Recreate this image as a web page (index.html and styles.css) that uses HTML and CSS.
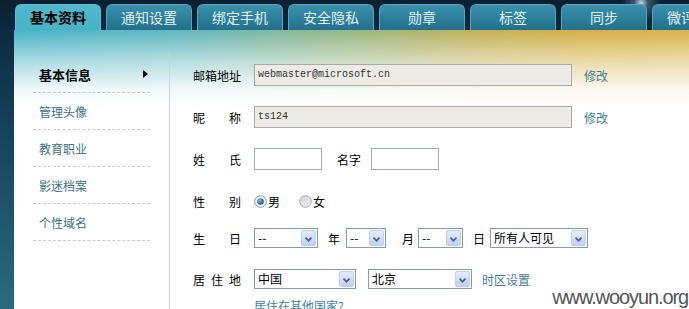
FILE: index.html
```html
<!DOCTYPE html>
<html>
<head>
<meta charset="utf-8">
<link rel="stylesheet" href="styles.css">
</head>
<body>
<div class="page">
  <nav class="tabs">
    <div class="tab active">基本资料</div>
    <div class="tab">通知设置</div>
    <div class="tab">绑定手机</div>
    <div class="tab">安全隐私</div>
    <div class="tab">勋章</div>
    <div class="tab">标签</div>
    <div class="tab">同步</div>
    <div class="tab">微评设置</div>
  </nav>
  <div class="main">
    <aside class="side">
      <ul class="menu">
        <li class="cur"><span>基本信息</span><i class="tri"></i></li>
        <li>管理头像</li>
        <li>教育职业</li>
        <li>影迷档案</li>
        <li>个性域名</li>
      </ul>
    </aside>
    <section class="form">
      <div class="row r1">
        <div class="lbl"><span>邮箱地址</span></div>
        <div class="inp ro wide">webmaster@microsoft.cn</div>
        <a class="link edit">修改</a>
      </div>
      <div class="row r2">
        <div class="lbl"><span>昵</span><span>称</span></div>
        <div class="inp ro wide">ts124</div>
        <a class="link edit">修改</a>
      </div>
      <div class="row r3">
        <div class="lbl"><span>姓</span><span>氏</span></div>
        <div class="inp small"></div>
        <span class="mid">名字</span>
        <div class="inp small"></div>
      </div>
      <div class="row r4">
        <div class="lbl"><span>性</span><span>别</span></div>
        <span class="radio">
          <svg width="13" height="13" viewBox="0 0 13 13"><defs><radialGradient id="rg" cx="0.4" cy="0.35" r="0.7"><stop offset="0" stop-color="#7fb7e6"/><stop offset="1" stop-color="#0f4f86"/></radialGradient></defs><circle cx="6.5" cy="6.5" r="5.8" fill="#f4f4f4" stroke="#8a9aa8" stroke-width="1"/><circle cx="6.5" cy="6.5" r="3.3" fill="url(#rg)"/></svg>
        </span>
        <span class="rtext">男</span>
        <span class="radio gap">
          <svg width="13" height="13" viewBox="0 0 13 13"><defs><linearGradient id="lg" x1="0" y1="0" x2="1" y2="1"><stop offset="0" stop-color="#cfcfcf"/><stop offset="1" stop-color="#f7f7f7"/></linearGradient></defs><circle cx="6.5" cy="6.5" r="5.8" fill="url(#lg)" stroke="#a4a9ad" stroke-width="1"/></svg>
        </span>
        <span class="rtext">女</span>
      </div>
      <div class="row r5">
        <div class="lbl"><span>生</span><span>日</span></div>
        <div class="sel s1"><span class="v">--</span><span class="arr"><svg width="15" height="16" viewBox="0 0 15 16"><path d="M4 6.5 L7.5 10 L11 6.5" fill="none" stroke="#4d6185" stroke-width="2"/></svg></span></div>
        <span class="unit u1">年</span>
        <div class="sel s2"><span class="v">--</span><span class="arr"><svg width="15" height="16" viewBox="0 0 15 16"><path d="M4 6.5 L7.5 10 L11 6.5" fill="none" stroke="#4d6185" stroke-width="2"/></svg></span></div>
        <span class="unit u2">月</span>
        <div class="sel s3"><span class="v">--</span><span class="arr"><svg width="15" height="16" viewBox="0 0 15 16"><path d="M4 6.5 L7.5 10 L11 6.5" fill="none" stroke="#4d6185" stroke-width="2"/></svg></span></div>
        <span class="unit u3">日</span>
        <div class="sel s4"><span class="v">所有人可见</span><span class="arr"><svg width="15" height="16" viewBox="0 0 15 16"><path d="M4 6.5 L7.5 10 L11 6.5" fill="none" stroke="#4d6185" stroke-width="2"/></svg></span></div>
      </div>
      <div class="row r6">
        <div class="lbl"><span>居</span><span>住</span><span>地</span></div>
        <div class="sel s5"><span class="v">中国</span><span class="arr"><svg width="15" height="16" viewBox="0 0 15 16"><path d="M4 6.5 L7.5 10 L11 6.5" fill="none" stroke="#4d6185" stroke-width="2"/></svg></span></div>
        <div class="sel s6"><span class="v">北京</span><span class="arr"><svg width="15" height="16" viewBox="0 0 15 16"><path d="M4 6.5 L7.5 10 L11 6.5" fill="none" stroke="#4d6185" stroke-width="2"/></svg></span></div>
        <a class="link tz">时区设置</a>
      </div>
      <div class="other"><a class="link">居住在其他国家?</a></div>
    </section>
  </div>
  <div class="wm">www.wooyun.org</div>
</div>
</body>
</html>
```
FILE: styles.css
```css
* { box-sizing: border-box; margin: 0; padding: 0; }
html, body { width: 689px; height: 309px; overflow: hidden; }
body {
  font: 12px "Noto Sans CJK SC", "Liberation Sans", sans-serif;
  color: #000;
  background:
    radial-gradient(circle at 641px 3px, rgba(235,245,255,0.85) 0, rgba(140,175,210,0.35) 7px, rgba(0,0,0,0) 20px),
    linear-gradient(#0a1f31 0, #0c2a40 30px, #164860 150px, #2a6a7f 309px);
}
.page { position: relative; height: 309px; }

.tabs { display: flex; gap: 5px; padding: 4px 0 0 15px; height: 30px; overflow: hidden; white-space: nowrap; }
.tab {
  flex: 0 0 86px; height: 26px;
  border: 1px solid #5aa3bb; border-bottom: 0; border-radius: 6px 6px 0 0;
  background: linear-gradient(#3a91ab, #226f8c);
  color: #e2f2f7; font-size: 14px; line-height: 24px; text-align: center;
}
.tab.active { background: linear-gradient(#52b8cc, #48b2c7); border-color: #5fbdd0; color: #000; font-weight: bold; }

.main {
  margin-left: 14px; height: 279px; display: flex;
  background:
    linear-gradient(rgba(255,255,255,0) 0, rgba(255,255,255,0.55) 32px, rgba(255,255,255,0.92) 60px, #fff 78px),
    linear-gradient(90deg, #47b3c7 0, #62b9bf 25%, #95b787 48%, #c1b258 68%, #d6b146 85%, #d9b44e 100%);
}

.side { width: 156px; margin-top: 22px; padding-top: 4px; border-right: 1px solid #d3d3d3; flex: none; }
.menu { list-style: none; margin-left: 19px; width: 117px; }
.menu li {
  height: 37px; border-bottom: 1px dashed #cacaca; padding: 0 2px 0 6px;
  display: flex; align-items: center; justify-content: space-between;
  color: #417282; font-size: 12px;
}
.menu li.cur { color: #000; font-weight: bold; font-size: 13px; }
.tri { width: 0; height: 0; border-left: 5px solid #000; border-top: 4px solid transparent; border-bottom: 4px solid transparent; }

.form { padding: 34px 0 0 23px; flex: 1; }
.row { display: flex; align-items: center; height: 22px; }
.r2, .r3, .r4 { margin-top: 20px; }
.r5 { margin-top: 16px; height: 20px; }
.r6 { margin-top: 21px; height: 20px; }
.lbl { width: 48px; margin-right: 13px; display: flex; justify-content: space-between; flex: none; }

.inp { height: 22px; border: 1px solid #a9a9a9; background: #fff; flex: none; }
.inp.ro { background: #ecebe6; font: 10px "Liberation Mono", monospace; color: #333; padding-left: 3px; line-height: 20px; }
.inp.wide { width: 318px; }
.inp.small { width: 68px; border-color: #a5acb2; }
.mid { margin: 0 10px 0 15px; }

.link { color: #3f7f93; text-decoration: none; }
.edit { margin-left: 12px; }

.radio { display: inline-flex; width: 13px; height: 13px; }
.radio.gap { margin-left: 19px; }
.rtext { margin-left: 1px; }

.sel {
  height: 20px; border: 1px solid #7f9db9; background: #fff;
  display: flex; align-items: center; padding: 0 1px 0 3px; flex: none;
}
.sel .v { flex: 1; line-height: 18px; }
.arr {
  width: 15px; height: 16px; border: 1px solid #bcd0f2; border-radius: 2px;
  background: linear-gradient(#e6eefc, #bdd0f6);
  display: flex;
}
.s1 { width: 64px; }
.s2 { width: 40px; }
.s3 { width: 45px; }
.s4 { width: 98px; }
.s5 { width: 102px; }
.s6 { width: 104px; margin-left: 12px; }
.u1 { margin: 0 6px 0 10px; }
.u2 { margin: 0 4px 0 16px; }
.u3 { margin: 0 5px 0 10px; }
.tz { margin-left: 10px; }

.other { margin: 10px 0 0 61px; line-height: 14px; }

.wm {
  position: absolute; top: 287px; right: 1px;
  font: 20px/20px "Liberation Sans", sans-serif; letter-spacing: -1.1px;
  color: #555;
}
```
